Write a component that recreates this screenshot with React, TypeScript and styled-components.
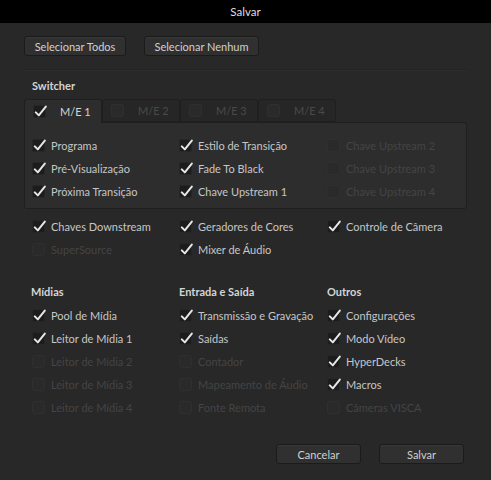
import { memo } from 'react';
import styled, { createGlobalStyle, css } from 'styled-components';

const GlobalStyle = createGlobalStyle`
  html, body {
    margin: 0;
    background: #282828;
  }
  body {
    font-family: Lato, 'Liberation Sans', sans-serif;
    font-size: 11px;
    color: #c6c6c6;
  }
`;

const SDialog = styled.div`
  width: 491px;
  height: 480px;
  background: #282828;
  display: flex;
  flex-direction: column;
`;

const STitleBar = styled.div`
  height: 23px;
  background: #000;
  color: #dedede;
  font-size: 11.5px;
  display: flex;
  align-items: center;
  justify-content: center;
`;

const SBody = styled.div`
  padding: 13px 24px 0 24px;
  display: flex;
  flex-direction: column;
  flex: 1;
`;

const SButtonRow = styled.div<{ $end?: boolean }>`
  display: flex;
  gap: 18px;
  justify-content: ${(p) => (p.$end ? 'flex-end' : 'flex-start')};
  ${(p) =>
    p.$end &&
    css`
      margin-top: auto;
      padding-right: 3px;
      margin-bottom: 16px;
    `}
`;

const SButton = styled.button<{ $w: number }>`
  width: ${(p) => p.$w}px;
  height: 20px;
  padding: 0;
  background: #303030;
  border: 1px solid #1b1b1b;
  border-radius: 3px;
  box-shadow: inset 0 1px 0 rgba(255, 255, 255, 0.04);
  color: #d0d0d0;
  font-family: inherit;
  font-size: 11px;
`;

const SDivider = styled.div`
  margin-top: 13px;
  height: 1px;
  background: #222;
  border-bottom: 1px solid #2e2e2e;
`;

const SHeading = styled.div<{ $pad?: number }>`
  font-weight: 700;
  color: #d4d4d4;
  font-size: 11px;
  padding-left: ${(p) => p.$pad ?? 8}px;
  height: 15px;
  line-height: 15px;
`;

const STabs = styled.div`
  display: flex;
  margin-top: 6px;
  height: 23px;
`;

const STab = styled.div<{ $active?: boolean }>`
  width: 78px;
  display: flex;
  align-items: center;
  gap: 14px;
  padding-left: 8px;
  box-sizing: border-box;
  border: 1px solid #1f1f1f;
  border-bottom: none;
  border-radius: 3px 3px 0 0;
  background: ${(p) => (p.$active ? '#2d2d2d' : '#262626')};
  color: ${(p) => (p.$active ? '#d4d4d4' : '#4a4a4a')};
  font-size: 11px;
  position: relative;
  z-index: ${(p) => (p.$active ? 1 : 0)};
  margin-bottom: ${(p) => (p.$active ? '-1px' : '0')};
  ${(p) =>
    !p.$active &&
    css`
      border-bottom: 1px solid #1f1f1f;
    `}
`;

const SPanel = styled.div`
  width: 443px;
  box-sizing: border-box;
  background: #2d2d2d;
  border: 1px solid #1f1f1f;
  border-radius: 0 3px 3px 3px;
  padding: 11px 7px 5px 7px;
`;

const SGrid = styled.div`
  display: grid;
  grid-template-columns: 147px 148px 140px;
`;

const SSection = styled.div<{ $top: number; $pad?: number }>`
  margin-top: ${(p) => p.$top}px;
  padding-left: ${(p) => p.$pad ?? 8}px;
`;

const SItem = styled.div<{ $disabled?: boolean }>`
  height: 23px;
  display: flex;
  align-items: center;
  gap: 6px;
  white-space: nowrap;
  font-size: 11px;
  color: ${(p) => (p.$disabled ? '#444' : '#c6c6c6')};
`;

const SBox = styled.span<{ $disabled?: boolean }>`
  width: 13px;
  height: 13px;
  flex: none;
  box-sizing: border-box;
  border-radius: 2px;
  background: ${(p) => (p.$disabled ? '#2a2a2a' : '#1c1c1c')};
  border: 1px solid ${(p) => (p.$disabled ? '#2f2f2f' : '#262626')};
  position: relative;
`;

const SCheckSvg = styled.svg`
  position: absolute;
  left: 0px;
  top: -2px;
`;

const Check = ({ on, disabled }: { on?: boolean; disabled?: boolean }) => (
  <SBox $disabled={disabled}>
    {on && (
      <SCheckSvg width='13' height='14' viewBox='0 0 13 14'>
        <path d='M1.8 8.4 L4.8 11.4 L11.8 2.6' fill='none' stroke='#e6e6e6' strokeWidth='2' strokeLinecap='round' strokeLinejoin='round' />
      </SCheckSvg>
    )}
  </SBox>
);

type Item = { label: string; on?: boolean; disabled?: boolean } | null;

const Option = ({ item }: { item: Item }) => {
  if (!item) return <div />;
  return (
    <SItem $disabled={item.disabled}>
      <Check on={item.on} disabled={item.disabled} />
      {item.label}
    </SItem>
  );
};

const meRows: Item[] = [
  { label: 'Programa', on: true },
  { label: 'Estilo de Transição', on: true },
  { label: 'Chave Upstream 2', disabled: true },
  { label: 'Pré-Visualização', on: true },
  { label: 'Fade To Black', on: true },
  { label: 'Chave Upstream 3', disabled: true },
  { label: 'Próxima Transição', on: true },
  { label: 'Chave Upstream 1', on: true },
  { label: 'Chave Upstream 4', disabled: true },
];

const switcherRows: Item[] = [
  { label: 'Chaves Downstream', on: true },
  { label: 'Geradores de Cores', on: true },
  { label: 'Controle de Câmera', on: true },
  { label: 'SuperSource', disabled: true },
  { label: 'Mixer de Áudio', on: true },
  null,
];

const bottomRows: Item[] = [
  { label: 'Pool de Mídia', on: true },
  { label: 'Transmissão e Gravação', on: true },
  { label: 'Configurações', on: true },
  { label: 'Leitor de Mídia 1', on: true },
  { label: 'Saídas', on: true },
  { label: 'Modo Vídeo', on: true },
  { label: 'Leitor de Mídia 2', disabled: true },
  { label: 'Contador', disabled: true },
  { label: 'HyperDecks', on: true },
  { label: 'Leitor de Mídia 3', disabled: true },
  { label: 'Mapeamento de Áudio', disabled: true },
  { label: 'Macros', on: true },
  { label: 'Leitor de Mídia 4', disabled: true },
  { label: 'Fonte Remota', disabled: true },
  { label: 'Câmeras VISCA', disabled: true },
];

const tabs = ['M/E 1', 'M/E 2', 'M/E 3', 'M/E 4'];

const App = () => (
  <>
    <GlobalStyle />
    <SDialog>
      <STitleBar>Salvar</STitleBar>
      <SBody>
        <SButtonRow>
          <SButton $w={102}>Selecionar Todos</SButton>
          <SButton $w={115}>Selecionar Nenhum</SButton>
        </SButtonRow>
        <SDivider />

        <SSection $top={7} $pad={0}>
          <SHeading>Switcher</SHeading>
        </SSection>
        <STabs>
          {tabs.map((t, i) => (
            <STab key={t} $active={i === 0}>
              <Check on={i === 0} disabled={i !== 0} />
              {t}
            </STab>
          ))}
        </STabs>
        <SPanel>
          <SGrid>
            {meRows.map((item, i) => (
              <Option key={i} item={item} />
            ))}
          </SGrid>
        </SPanel>

        <SSection $top={6}>
          <SGrid>
            {switcherRows.map((item, i) => (
              <Option key={i} item={item} />
            ))}
          </SGrid>
        </SSection>

        <SSection $top={23} $pad={7}>
          <SGrid>
            <SHeading $pad={0}>Mídias</SHeading>
            <SHeading $pad={1}>Entrada e Saída</SHeading>
            <SHeading $pad={1}>Outros</SHeading>
          </SGrid>
        </SSection>
        <SSection $top={5}>
          <SGrid>
            {bottomRows.map((item, i) => (
              <Option key={i} item={item} />
            ))}
          </SGrid>
        </SSection>

        <SButtonRow $end>
          <SButton $w={85}>Cancelar</SButton>
          <SButton $w={85}>Salvar</SButton>
        </SButtonRow>
      </SBody>
    </SDialog>
  </>
);

export default memo(App);
